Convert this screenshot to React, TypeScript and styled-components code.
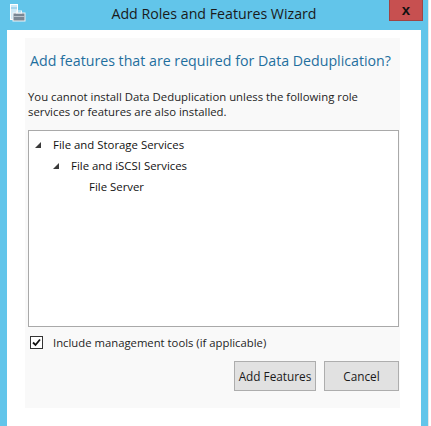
import React from "react";
import styled, { createGlobalStyle } from "styled-components";

const GlobalStyle = createGlobalStyle`
  html, body { margin: 0; padding: 0; background: #ffffff; }
  body { font-family: "Open Sans", "Noto Sans", sans-serif; }
  * { box-sizing: border-box; }
`;

const Screen = styled.div`
  display: flex;
  width: 431px;
  height: 426px;
  overflow: hidden;
`;

const Window = styled.div`
  flex: none;
  width: 428px;
  height: 426px;
  background: #62c5ea;
  display: flex;
  flex-direction: column;
`;

const TitleBar = styled.div`
  flex: none;
  height: 30px;
  display: grid;
  grid-template-columns: 1fr auto 1fr;
  align-items: start;
`;

const AppIcon = styled.svg`
  margin: 4px 0 0 8px;
  display: block;
`;

const Title = styled.div`
  font-size: 14.2px;
  line-height: 20px;
  margin-top: 4px;
  color: #1a1a1a;
  white-space: nowrap;
`;

const CloseButton = styled.div`
  justify-self: end;
  margin-right: 5px;
  width: 34px;
  height: 21px;
  background: #c75050;
  border: 1px solid #a04444;
  border-top: none;
  display: flex;
  align-items: center;
  justify-content: center;
  font-family: "Liberation Sans", Arial, sans-serif;
  font-weight: bold;
  font-size: 15px;
  line-height: 1;
  padding-bottom: 2px;
  color: #111;
`;

const Client = styled.div`
  flex: 1;
  margin: 0 7px;
  background: #ffffff;
  display: flex;
  padding: 8px 21px 18px 18px;
  min-height: 0;
  min-width: 0;
`;

const Panel = styled.div`
  flex: 1;
  min-width: 0;
  background: #f9f9f9;
  display: flex;
  flex-direction: column;
  padding: 0 1px 6px 3px;
`;

const Heading = styled.h1`
  margin: 13px 0 0 2px;
  font-weight: normal;
  font-size: 14.2px;
  line-height: 20px;
  color: #1f6f9e;
  white-space: nowrap;
`;

const Message = styled.p`
  margin: 18px 0 0 0;
  font-size: 11.35px;
  line-height: 15px;
  color: #1e1e1e;
`;

const TreeBox = styled.div`
  margin-top: 11px;
  height: 197px;
  border: 1px solid #a9a9a9;
  background: #ffffff;
  padding-top: 3px;
  display: flex;
  flex-direction: column;
`;

const TreeRow = styled.div<{ $level: number }>`
  display: flex;
  align-items: center;
  height: 21px;
  padding-left: ${(p) => 6 + p.$level * 18}px;
  font-size: 11.4px;
  color: #111;
  white-space: nowrap;
`;

const Expander = styled.span`
  width: 18px;
  flex: none;
  display: flex;
  align-items: center;
`;

const CheckRow = styled.label`
  margin-top: 9px;
  display: flex;
  align-items: center;
  gap: 10px;
  padding-left: 2px;
  font-size: 11.3px;
  color: #1e1e1e;
  height: 13px;
`;

const CheckBox = styled.span`
  width: 13px;
  height: 13px;
  border: 1px solid #333;
  background: #fff;
  display: flex;
  align-items: center;
  justify-content: center;
`;

const ButtonRow = styled.div`
  margin-top: 12px;
  display: flex;
  justify-content: flex-end;
  gap: 8px;
`;

const Button = styled.button<{ $w: number }>`
  width: ${(p) => p.$w}px;
  height: 30px;
  background: #e1e1e1;
  border: 1px solid #adadad;
  font-family: inherit;
  font-size: 11.8px;
  color: #1a1a1a;
  padding: 0;
`;

const BackStrip = styled.div`
  flex: 1;
  background: #ffffff;
  border-left: 1px solid #e6e6e6;
`;

const Triangle = () => (
  <svg width="6" height="6" viewBox="0 0 6 6">
    <polygon points="6,0 6,6 0,6" fill="#3a3a3a" />
  </svg>
);

export default function App() {
  return (
    <>
      <GlobalStyle />
      <Screen>
        <Window>
          <TitleBar>
            <AppIcon width="18" height="18" viewBox="0 0 18 18">
              <rect x="2.5" y="0.5" width="7" height="15" fill="#cfeaf7" stroke="#ffffff" />
              <line x1="3" y1="4" x2="9" y2="4" stroke="#7fbfe0" />
              <rect x="5" y="9" width="12" height="8" fill="#7a8794" stroke="#f0f4f7" strokeWidth="1" />
              <rect x="8.5" y="7" width="5" height="2" fill="none" stroke="#f0f4f7" strokeWidth="1" />
              <line x1="5" y1="12.5" x2="17" y2="12.5" stroke="#b9c3cc" />
            </AppIcon>
            <Title>Add Roles and Features Wizard</Title>
            <CloseButton>x</CloseButton>
          </TitleBar>
          <Client>
            <Panel>
              <Heading>Add features that are required for Data Deduplication?</Heading>
              <Message>
                You cannot install Data Deduplication unless the following role
                <br />
                services or features are also installed.
              </Message>
              <TreeBox>
                <TreeRow $level={0}>
                  <Expander><Triangle /></Expander>File and Storage Services
                </TreeRow>
                <TreeRow $level={1}>
                  <Expander><Triangle /></Expander>File and iSCSI Services
                </TreeRow>
                <TreeRow $level={2}>
                  <Expander />File Server
                </TreeRow>
              </TreeBox>
              <CheckRow>
                <CheckBox>
                  <svg width="9" height="9" viewBox="0 0 9 9">
                    <polyline points="1,4.5 3.5,7 8,1.5" fill="none" stroke="#111" strokeWidth="1.8" />
                  </svg>
                </CheckBox>
                Include management tools (if applicable)
              </CheckRow>
              <ButtonRow>
                <Button $w={82}>Add Features</Button>
                <Button $w={75}>Cancel</Button>
              </ButtonRow>
            </Panel>
          </Client>
        </Window>
        <BackStrip />
      </Screen>
    </>
  );
}
